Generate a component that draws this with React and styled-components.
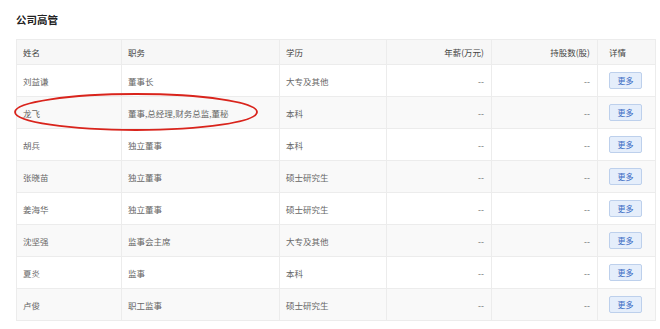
import React from "react";
import styled, { createGlobalStyle } from "styled-components";

const GlobalStyle = createGlobalStyle`
  body {
    margin: 0;
    background: #fff;
    font-family: "Noto Sans CJK SC", "Noto Sans", sans-serif;
  }
`;

const executives = [
  { name: "刘益谦", post: "董事长", edu: "大专及其他" },
  { name: "龙飞", post: "董事,总经理,财务总监,董秘", edu: "本科" },
  { name: "胡兵", post: "独立董事", edu: "本科" },
  { name: "张晓苗", post: "独立董事", edu: "硕士研究生" },
  { name: "姜海华", post: "独立董事", edu: "硕士研究生" },
  { name: "沈坚强", post: "监事会主席", edu: "大专及其他" },
  { name: "夏炎", post: "监事", edu: "本科" },
  { name: "卢俊", post: "职工监事", edu: "硕士研究生" }
];

const columns = [
  { label: "姓名", width: 105 },
  { label: "职务", width: 158 },
  { label: "学历", width: 107 },
  { label: "年薪(万元)", width: 105, right: true },
  { label: "持股数(股)", width: 106, right: true },
  { label: "详情", width: 58, wide: true }
];

class Executives extends React.Component {
  render() {
    return (
      <Page>
        <GlobalStyle />
        <Title>公司高管</Title>
        <TableWrap>
          <Table>
            <colgroup>
              {columns.map(col => (
                <col key={col.label} style={{ width: col.width }} />
              ))}
            </colgroup>
            <thead>
              <tr>
                {columns.map(col => (
                  <Th key={col.label} $right={col.right} $wide={col.wide}>
                    {col.label}
                  </Th>
                ))}
              </tr>
            </thead>
            <tbody>
              {executives.map((item, i) => (
                <Row key={item.name} $shaded={i % 2 === 1}>
                  <Td>{item.name}</Td>
                  <Td>{item.post}</Td>
                  <Td>{item.edu}</Td>
                  <Td $right>--</Td>
                  <Td $right>--</Td>
                  <Td $wide>
                    <MoreButton>更多</MoreButton>
                  </Td>
                </Row>
              ))}
            </tbody>
          </Table>
          <Mark width="246" height="42" viewBox="0 0 246 42">
            <ellipse cx="123" cy="21" rx="121" ry="18" fill="none" stroke="#d9241c" strokeWidth="1.8" />
          </Mark>
        </TableWrap>
      </Page>
    );
  }
}

const Page = styled.div`
  padding: 12px 5px 0 16px;
`;

const Title = styled.h3`
  margin: 0 0 12px;
  font-size: 10.5px;
  line-height: 15px;
  font-weight: 700;
  color: #222;
`;

const TableWrap = styled.div`
  position: relative;
  width: 639px;
`;

const Table = styled.table`
  width: 639px;
  border-collapse: collapse;
  table-layout: fixed;
  font-size: 8.5px;
`;

const Th = styled.th`
  height: 24px;
  padding: 0 ${p => (p.$wide ? "11px" : "7px")} 0 ${p => (p.$wide ? "11px" : "6px")};
  background: #f7f7f7;
  border: 1px solid #ececec;
  color: #444;
  font-weight: 400;
  text-align: ${p => (p.$right ? "right" : "left")};
`;

const Row = styled.tr`
  background: ${p => (p.$shaded ? "#f9f9f9" : "#fff")};
`;

const Td = styled.td`
  height: 31px;
  padding: 0 ${p => (p.$wide ? "11px" : "7px")} 0 ${p => (p.$wide ? "11px" : "6px")};
  border: 1px solid #ececec;
  color: #666;
  text-align: ${p => (p.$right ? "right" : "left")};
`;

const MoreButton = styled.button`
  width: 33px;
  height: 17px;
  padding: 0;
  border: 1px solid #bdd0ec;
  border-radius: 2px;
  background: #e5eefb;
  color: #3b6cc4;
  font-family: inherit;
  font-size: 8px;
  line-height: 15px;
`;

const Mark = styled.svg`
  position: absolute;
  left: -3px;
  top: 52px;
  pointer-events: none;
`;

export default Executives;
